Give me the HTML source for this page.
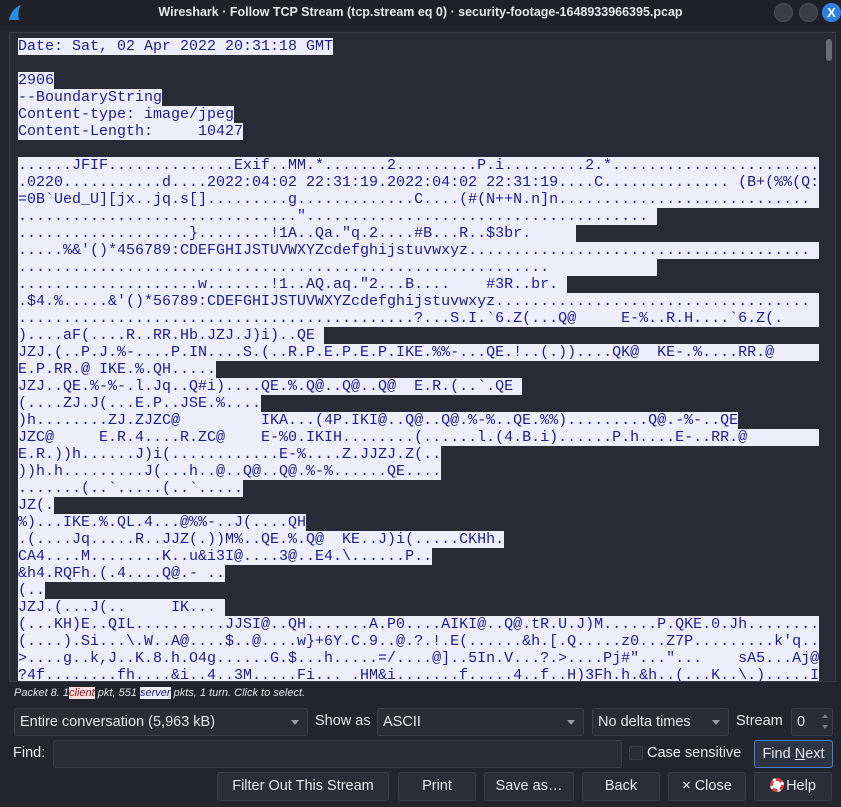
<!DOCTYPE html>
<html><head><meta charset="utf-8"><style>
*{box-sizing:border-box;margin:0;padding:0}
body{width:841px;height:807px;background:#23252e;color:#e4e4ea;font-family:"Liberation Sans","DejaVu Sans",sans-serif;position:relative;overflow:hidden}
.title{position:absolute;left:0;top:0;width:841px;height:26px;background:#1f2028;text-align:center;font-size:12.5px;font-weight:bold;line-height:24px;color:#e8e8ee}
.circ{position:absolute;top:3px;width:19px;height:19px;border-radius:50%;background:#3a3c46;border:1px solid #4a4c56}
.txt{position:absolute;left:9px;top:32px;width:827px;height:650px;background:#282a35;border:1px solid #3a3d49;overflow:hidden}
.lines{position:absolute;left:8px;top:5px;font-family:"Liberation Mono",monospace;font-size:15px;line-height:17px;color:#1c1c8c}
.lines div{height:17px;white-space:pre}
.lines span{display:inline-block;height:17px;background:#eeeefa;overflow:hidden;white-space:pre;vertical-align:top}
.sb{position:absolute;right:3px;top:6px;width:6px;height:22px;background:#6a6c76;border-radius:3px}
.status{position:absolute;left:14px;top:687px;font-size:11px;font-style:italic;color:#e4e4ea}
.ctl{position:absolute;background:#2a2c36;border:1px solid #3d404c;border-radius:3px;font-size:14.5px;line-height:26px;padding-left:5px;color:#e8e8ee;white-space:nowrap}
.arr{position:absolute;right:8px;top:11px;border-left:4px solid transparent;border-right:4px solid transparent;border-top:5px solid #9a9ca6}
.lbl{position:absolute;font-size:14.5px;color:#e8e8ee;white-space:nowrap}
.btn{position:absolute;top:772px;height:29px;background:#2b2e38;border:1px solid #3d404c;border-radius:3px;font-size:14.5px;line-height:27px;text-align:center;color:#e8e8ee;white-space:nowrap}
</style></head><body>
<div class="title">Wireshark · Follow TCP Stream (tcp.stream eq 0) · security-footage-1648933966395.pcap</div>
<svg style="position:absolute;left:6px;top:4px" width="18" height="18" viewBox="0 0 18 18"><path d="M3 16 C4 9 9 3 15 1 C12 6 12 11 13 16 Z" fill="#2a8de0"/></svg>
<div class="circ" style="left:774px"></div>
<div class="circ" style="left:799px"></div>
<div class="circ" style="left:822px;background:#2f7fe6;border-color:#2f7fe6;color:#fff;font-weight:bold;font-size:13px;text-align:center;line-height:17px">X</div>

<div class="txt">
<div class="lines">
<div><span style="width:315px">Date: Sat, 02 Apr 2022 20:31:18 GMT</span></div>
<div></div>
<div><span style="width:36px">2906</span></div>
<div><span style="width:144px">--BoundaryString</span></div>
<div><span style="width:216px">Content-type: image/jpeg</span></div>
<div><span style="width:225px">Content-Length:     10427</span></div>
<div></div>
<div><span style="width:801px">......JFIF..............Exif..MM.*.......2.........P.i.........2.*.......................</span></div>
<div><span style="width:801px">.0220...........d....2022:04:02 22:31:19.2022:04:02 22:31:19....C.............. (B+(%%(Q:</span></div>
<div><span style="width:801px">=0B`Ued_U][jx..jq.s[].........g.............C....(#(N++N.n]n............................</span></div>
<div><span style="width:639px">..............................."......................................</span></div>
<div><span style="width:558px">...................}........!1A..Qa."q.2....#B...R..$3br.</span></div>
<div><span style="width:801px">.....%&'()*456789:CDEFGHIJSTUVWXYZcdefghijstuvwxyz......................................</span></div>
<div><span style="width:639px">...........................................................</span></div>
<div><span style="width:549px">....................w.......!1..AQ.aq."2...B....    #3R..br.</span></div>
<div><span style="width:801px">.$4.%.....&'()*56789:CDEFGHIJSTUVWXYZcdefghijstuvwxyz...................................</span></div>
<div><span style="width:801px">............................................?...S.I.`6.Z(...Q@     E-%..R.H....`6.Z(.</span></div>
<div><span style="width:306px">)....aF(....R..RR.Hb.JZJ.J)i)..QE</span></div>
<div><span style="width:801px">JZJ.(..P.J.%-....P.IN....S.(..R.P.E.P.E.P.IKE.%%-...QE.!..(.))....QK@  KE-.%....RR.@</span></div>
<div><span style="width:198px">E.P.RR.@ IKE.%.QH.....</span></div>
<div><span style="width:504px">JZJ..QE.%-%-.l.Jq..Q#i)....QE.%.Q@..Q@..Q@  E.R.(..`.QE</span></div>
<div><span style="width:243px">(....ZJ.J(...E.P..JSE.%....</span></div>
<div><span style="width:720px">)h........ZJ.ZJZC@         IKA...(4P.IKI@..Q@..Q@.%-%..QE.%%).........Q@.-%-..QE0</span></div>
<div><span style="width:801px">JZC@     E.R.4....R.ZC@    E-%0.IKIH........(......l.(4.B.i)......P.h....E-..RR.@</span></div>
<div><span style="width:423px">E.R.))h......J)i(............E-%....Z.JJZJ.Z(..</span></div>
<div><span style="width:423px">))h.h.........J(...h..@..Q@..Q@.%-%......QE....</span></div>
<div><span style="width:225px">.......(..`.....(..`.....</span></div>
<div><span style="width:36px">JZ(.</span></div>
<div><span style="width:288px">%)...IKE.%.QL.4...@%%-..J(....QH</span></div>
<div><span style="width:486px">.(....Jq.....R..JJZ(.))M%..QE.%.Q@  KE..J)i(.....CKHh..</span></div>
<div><span style="width:414px">CA4....M........K..u&amp;i3I@....3@..E4.\......P..</span></div>
<div><span style="width:207px">&amp;h4.RQFh.(.4....Q@.- ..</span></div>
<div><span style="width:27px">(..</span></div>
<div><span style="width:207px">JZJ.(...J(..     IK...</span></div>
<div><span style="width:801px">(...KH)E..QIL..........JJSI@..QH.......A.P0....AIKI@..Q@.tR.U.J)M......P.QKE.0.Jh........</span></div>
<div><span style="width:801px">(....).Si...\.W..A@....$..@....w}+6Y.C.9..@.?.!.E(......&amp;h.[.Q.....z0...Z7P.........k'q..</span></div>
<div><span style="width:801px">&gt;....g..k,J..K.8.h.O4g......G.$...h.....=/....@]..5In.V...?.&gt;....Pj#"..."...    sA5...Aj@</span></div>
<div><span style="width:801px">?4f........fh....&amp;i..4..3M.....Fi... .HM&amp;i.......f.....4..f..H)3Fh.h.&amp;h..(...K..\.).....I</span></div>
</div>
<div class="sb"></div>
</div>

<div class="status">Packet 8. 1<span style="background:#fbe3e3;color:#8a1010">client</span> pkt, 551 <span style="background:#eeeefa;color:#1c1c8c">server</span> pkts, 1 turn. Click to select.</div>

<div class="ctl" style="left:14px;top:708px;width:294px;height:28px">Entire conversation (5,963 kB)<div class="arr"></div></div>
<div class="lbl" style="left:315px;top:713px">Show as</div>
<div class="ctl" style="left:377px;top:708px;width:207px;height:28px">ASCII<div class="arr"></div></div>
<div class="ctl" style="left:592px;top:708px;width:137px;height:28px">No delta times<div class="arr"></div></div>
<div class="lbl" style="left:736px;top:713px">Stream</div>
<div class="ctl" style="left:791px;top:708px;width:42px;height:28px">0<div style="position:absolute;right:4px;top:5px;border-left:3px solid transparent;border-right:3px solid transparent;border-bottom:4px solid #7a7c86"></div><div style="position:absolute;right:4px;top:16px;border-left:3px solid transparent;border-right:3px solid transparent;border-top:4px solid #7a7c86"></div></div>

<div class="lbl" style="left:13px;top:745px">Find:</div>
<div class="ctl" style="left:53px;top:740px;width:569px;height:28px"></div>
<div style="position:absolute;left:629px;top:746px;width:14px;height:14px;background:#2a2c36;border:1px solid #3d404c;border-radius:2px"></div>
<div class="lbl" style="left:647px;top:745px">Case sensitive</div>
<div class="btn" style="left:754px;top:740px;width:79px;height:28px;background:#2c3446;border-color:#4a80d0">Find <u>N</u>ext</div>

<div class="btn" style="left:217px;width:172px">Filter Out This Stream</div>
<div class="btn" style="left:398px;width:78px">Print</div>
<div class="btn" style="left:484px;width:90px">Save as…</div>
<div class="btn" style="left:582px;width:78px">Back</div>
<div class="btn" style="left:668px;width:78px">× Close</div>
<div class="btn" style="left:754px;width:78px"><span style="display:inline-block;width:14px;height:14px;border-radius:50%;border:3px dashed #e04040;background:#fff;vertical-align:-2px;margin-right:2px"></span>Help</div>
</body></html>
